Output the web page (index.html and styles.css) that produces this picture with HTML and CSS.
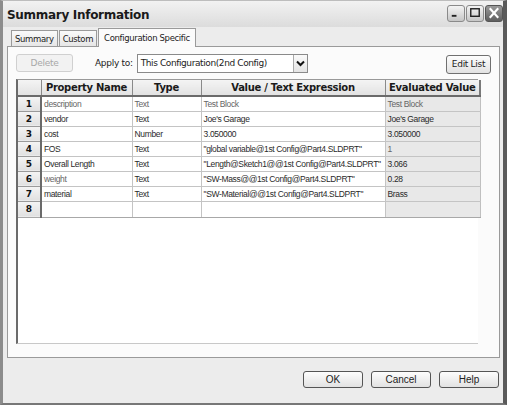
FILE: index.html
```html
<!DOCTYPE html>
<html>
<head>
<meta charset="utf-8">
<link rel="stylesheet" href="styles.css">
</head>
<body>
<div class="window">
  <div class="titlebar">
    <span class="title">Summary Information</span>
    <div class="caps">
      <div class="cap"><svg width="17" height="16" viewBox="0 0 17 16"><rect x="4" y="10" width="5" height="2" fill="#222"/></svg></div>
      <div class="cap"><svg width="17" height="16" viewBox="0 0 17 16"><rect x="4" y="3.5" width="9" height="8" fill="none" stroke="#222" stroke-width="1.5"/></svg></div>
      <div class="cap close"><svg width="17" height="16" viewBox="0 0 17 16"><path d="M4 3 L13 13 M13 3 L4 13" stroke="#fff" stroke-width="2.2"/></svg></div>
    </div>
  </div>
  <div class="tabs">
    <div class="tab">Summary</div>
    <div class="tab">Custom</div>
    <div class="tab active">Configuration Specific</div>
  </div>
  <div class="panel">
    <div class="toolbar">
      <div class="btn disabled del">Delete</div>
      <span class="apply">Apply to:</span>
      <div class="combo"><span class="combo-text">This Configuration(2nd Config)</span><span class="combo-arrow"><svg width="9" height="7" viewBox="0 0 9 7"><path d="M1 1.5 L4.5 5 L8 1.5" fill="none" stroke="#111" stroke-width="2"/></svg></span></div>
      <div class="spacer"></div>
      <div class="btn edit">Edit List</div>
    </div>
    <div class="gridarea">
      <table class="grid">
        <thead>
          <tr><th class="rh"></th><th class="c1">Property Name</th><th class="c2">Type</th><th class="c3">Value / Text Expression</th><th class="c4">Evaluated Value</th></tr>
        </thead>
        <tbody>
          <tr><td class="rh">1</td><td class="faint">description</td><td class="faint">Text</td><td class="faint">Test Block</td><td class="ev faint">Test Block</td></tr>
          <tr><td class="rh">2</td><td>vendor</td><td>Text</td><td>Joe's Garage</td><td class="ev">Joe's Garage</td></tr>
          <tr><td class="rh">3</td><td>cost</td><td>Number</td><td>3.050000</td><td class="ev">3.050000</td></tr>
          <tr><td class="rh">4</td><td>FOS</td><td>Text</td><td>"global variable@1st Config@Part4.SLDPRT"</td><td class="ev faint">1</td></tr>
          <tr><td class="rh">5</td><td>Overall Length</td><td>Text</td><td>"Length@Sketch1@@1st Config@Part4.SLDPRT"</td><td class="ev">3.066</td></tr>
          <tr><td class="rh">6</td><td class="faint">weight</td><td>Text</td><td>"SW-Mass@@1st Config@Part4.SLDPRT"</td><td class="ev">0.28</td></tr>
          <tr><td class="rh">7</td><td>material</td><td>Text</td><td>"SW-Material@@1st Config@Part4.SLDPRT"</td><td class="ev">Brass</td></tr>
          <tr><td class="rh">8</td><td></td><td></td><td></td><td class="ev"></td></tr>
        </tbody>
      </table>
    </div>
  </div>
  <div class="footer">
    <div class="btn big">OK</div>
    <div class="btn big">Cancel</div>
    <div class="btn big">Help</div>
  </div>
</div>
</body>
</html>
```
FILE: styles.css
```css
* { box-sizing: border-box; }
html, body { margin: 0; padding: 0; background: #fff; }
body { font-family: "DejaVu Sans", "Liberation Sans", sans-serif; }

.window {
  width: 507px;
  height: 405px;
  background: #ececec;
  border-left: 3px solid #8c8c8c;
  border-right: 4px solid #5a5a5a;
  border-bottom: 2px solid #777;
  border-top: 1px solid #bdbdbd;
  display: flex;
  flex-direction: column;
}

.titlebar {
  height: 26px;
  display: flex;
  align-items: center;
  justify-content: space-between;
  padding: 2px 0 0 4px;
  background: linear-gradient(#f2f2f2, #dcdcdc);
}
.title {
  font-family: "DejaVu Sans", sans-serif;
  font-weight: bold;
  font-size: 12px;
  color: #1a1a1a;
  letter-spacing: -0.3px;
}
.caps { display: flex; gap: 1px; margin-top: -4px; }
.cap {
  width: 18px; height: 17px;
  border: 1px solid #8a8a8a;
  border-radius: 3px;
  background: linear-gradient(#f4f4f4, #c6c6c6);
  display: flex; align-items: center; justify-content: center;
}
.cap.close { background: linear-gradient(#9a9a9a, #5e5e5e); border-color: #555; }

.tabs {
  display: flex;
  align-items: flex-end;
  padding-left: 8px;
  height: 19px;
  position: relative;
  z-index: 1;
}
.tab {
  font-family: "DejaVu Sans", sans-serif;
  font-size: 8.5px;
  letter-spacing: -0.35px;
  height: 16px;
  padding: 3px 3px 0;
  border: 1px solid #9a9a9a;
  border-bottom: none;
  background: linear-gradient(#fafafa, #e6e6e6);
  margin-right: 1px;
  color: #222;
}
.tab.active {
  height: 19px;
  background: #fbfbfb;
  padding-top: 4px;
  margin-bottom: -1px;
  padding-left: 5px;
  padding-right: 5px;
}

.panel {
  margin: 0 3px 0 4px;
  height: 312px;
  background: #fbfbfb;
  border: 1px solid #9a9a9a;
  padding: 6px 8px 13px 8px;
  display: flex;
  flex-direction: column;
}

.toolbar {
  display: flex;
  align-items: center;
  height: 20px;
}
.btn {
  font-family: "DejaVu Sans", sans-serif;
  font-size: 9px;
  letter-spacing: -0.3px;
  color: #222;
  border: 1px solid #707070;
  border-radius: 3px;
  background: linear-gradient(#fdfdfd, #e2e2e2);
  display: flex; align-items: center; justify-content: center;
}
.btn.disabled { color: #a8a8a8; border-color: #d0d0d0; background: #f2f2f2; }
.del { width: 57px; height: 18px; }
.apply {
  font-family: "DejaVu Sans", sans-serif;
  font-size: 9px;
  letter-spacing: -0.3px;
  margin-left: 22px;
  color: #222;
}
.combo {
  margin-left: 4px;
  width: 171px; height: 19px;
  border: 1px solid #8a8a8a;
  background: #fff;
  display: flex; align-items: center;
}
.combo-text {
  flex: 1;
  font-family: "DejaVu Sans", sans-serif;
  font-size: 9px;
  letter-spacing: -0.4px;
  padding-left: 3px;
  color: #222;
  white-space: nowrap;
  overflow: hidden;
}
.combo-arrow {
  width: 14px; height: 17px;
  border-left: 1px solid #aaa;
  background: linear-gradient(#fafafa, #e4e4e4);
  display: flex; align-items: center; justify-content: center;
}
.spacer { flex: 1; }
.edit { width: 45px; height: 19px; margin-top: 2px; }

.gridarea {
  margin-top: 6px;
  flex: 1;
  margin-right: 13px;
  background: #fff;
  border-left: 2px solid #6a6a6a;
  border-top: 1px solid #999;
  border-bottom: 1px solid #c8c8c8;
}
.grid {
  border-collapse: collapse;
  table-layout: fixed;
  width: 462px;
  font-family: "DejaVu Sans", sans-serif;
}
.grid th {
  height: 16px;
  font-size: 10px;
  font-weight: bold;
  letter-spacing: -0.3px;
  color: #1a1a1a;
  background: linear-gradient(#f4f4f4, #e2e2e2);
  border-right: 1px solid #8a8a8a;
  border-bottom: 2px solid #6a6a6a;
  padding: 0;
  text-align: center;
}
.grid th.rh { width: 23px; }
.grid th.c1 { width: 91px; }
.grid th.c2 { width: 69px; }
.grid th.c3 { width: 184px; }
.grid th.c4 { width: 95px; border-right: 2px solid #7a7a7a; }
.grid td {
  height: 15px;
  font-family: "Liberation Sans", Arial, sans-serif;
  font-size: 8.5px;
  letter-spacing: -0.35px;
  color: #2a2a2a;
  border-right: 1px solid #c4c4c4;
  border-bottom: 1px solid #c4c4c4;
  padding: 0 0 0 2px;
  white-space: nowrap;
  overflow: hidden;
}
.grid td.faint { color: #666; }
.grid td.rh {
  font-family: "DejaVu Sans", sans-serif;
  background: linear-gradient(#f4f4f4, #e0e0e0);
  text-align: center;
  font-weight: bold;
  font-size: 9px;
  letter-spacing: 0;
  color: #111;
  border-right: 2px solid #6a6a6a;
  border-bottom: 1px solid #9a9a9a;
  padding: 0;
}
.grid td.ev { background: #e8e8e8; border-right: 1px solid #c0c0c0; }
.grid tr:last-child td { height: 16px; border-bottom: 1px solid #a8a8a8; }

.footer {
  display: flex;
  justify-content: flex-end;
  gap: 8px;
  padding: 13px 4px 0 0;
}
.btn.big {
  width: 60px; height: 17px;
  font-family: "Liberation Sans", Arial, sans-serif;
  font-size: 10px;
  letter-spacing: 0;
  border-color: #555;
}
```
